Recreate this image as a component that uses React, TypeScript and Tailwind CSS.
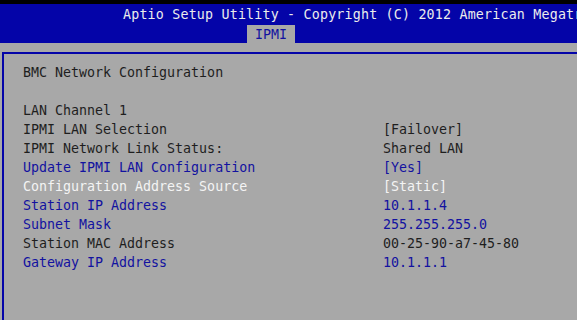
const rows: { label: string; value?: string; tone: "dark" | "blue" | "white" }[] = [
  { label: "BMC Network Configuration", tone: "dark" },
  { label: "", tone: "dark" },
  { label: "LAN Channel 1", tone: "dark" },
  { label: "IPMI LAN Selection", value: "[Failover]", tone: "dark" },
  { label: "IPMI Network Link Status:", value: "Shared LAN", tone: "dark" },
  { label: "Update IPMI LAN Configuration", value: "[Yes]", tone: "blue" },
  { label: "Configuration Address Source", value: "[Static]", tone: "white" },
  { label: "Station IP Address", value: "10.1.1.4", tone: "blue" },
  { label: "Subnet Mask", value: "255.255.255.0", tone: "blue" },
  { label: "Station MAC Address", value: "00-25-90-a7-45-80", tone: "dark" },
  { label: "Gateway IP Address", value: "10.1.1.1", tone: "blue" },
];

const toneClass = {
  dark: "text-[#1e1e1e]",
  blue: "text-[#1212a0]",
  white: "text-[#f4f4f4]",
};

export default function App() {
  return (
    <div className="w-[577px] h-[320px] overflow-hidden bg-[#a8a8a8] flex flex-col font-['DejaVu_Sans_Mono',monospace] text-[13.3px]">
      <div className="h-[4px] bg-black shrink-0" />
      {/* header */}
      <div className="h-[39px] bg-[#0404a8] flex flex-col shrink-0">
        <div className="h-[20px] mt-[1px] leading-[20px] pl-[123px] whitespace-nowrap tracking-[0.2px] text-[#ececec]">
          Aptio Setup Utility - Copyright (C) 2012 American Megatrends, Inc.
        </div>
        <div className="flex pl-[247px]">
          <div className="h-[18px] w-[48px] leading-[19px] bg-[#a8a8a8] text-center text-[#1212a0]">
            IPMI
          </div>
        </div>
      </div>
      {/* content */}
      <div className="flex-1 pt-[9px] pl-[2px]">
        <div className="h-full border-t-2 border-l-2 border-[#0404a8] pt-[9px] pl-[19px]">
          {rows.map((r, i) => (
            <div
              key={i}
              className={`flex h-[19px] leading-[19px] whitespace-nowrap ${toneClass[r.tone]}`}
            >
              <span className="w-[360px]">{r.label}</span>
              {r.value && <span>{r.value}</span>}
            </div>
          ))}
        </div>
      </div>
    </div>
  );
}
